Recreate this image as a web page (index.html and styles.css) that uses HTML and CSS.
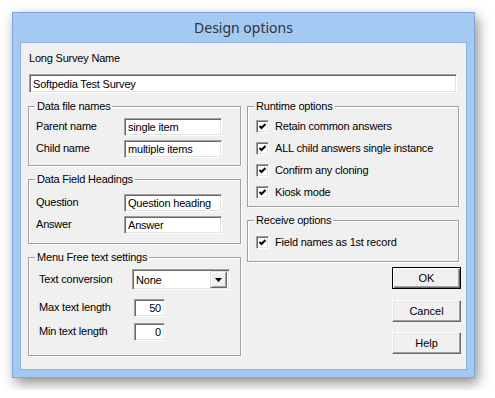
FILE: index.html
```html
<!DOCTYPE html>
<html lang="en">
<head>
    <meta charset="UTF-8">
    <title>Design options</title>
    <link rel="stylesheet" href="styles.css">
</head>
<body>
    <div class="window">
        <div class="title">Design options</div>
        <div class="client">
            <div class="name-label">Long Survey Name</div>
            <div class="field name-field">Softpedia Test Survey</div>

            <div class="columns">
                <div class="column">
                    <fieldset class="group">
                        <legend>Data file names</legend>
                        <div class="group-body files">
                            <div class="row"><span class="lbl">Parent name</span><span class="field small">single item</span></div>
                            <div class="row"><span class="lbl">Child name</span><span class="field small">multiple items</span></div>
                        </div>
                    </fieldset>

                    <fieldset class="group">
                        <legend>Data Field Headings</legend>
                        <div class="group-body headings">
                            <div class="row"><span class="lbl">Question</span><span class="field small">Question heading</span></div>
                            <div class="row"><span class="lbl">Answer</span><span class="field small">Answer</span></div>
                        </div>
                    </fieldset>

                    <fieldset class="group">
                        <legend>Menu Free text settings</legend>
                        <div class="group-body menu">
                            <div class="row tall">
                                <span class="lbl wide">Text conversion</span>
                                <span class="field select">None<span class="drop"><svg width="7" height="4" viewBox="0 0 7 4"><path d="M0 0h7L3.5 4z" fill="#000"/></svg></span></span>
                            </div>
                            <div class="row"><span class="lbl wide">Max text length</span><span class="field num">50</span></div>
                            <div class="row"><span class="lbl wide">Min text length</span><span class="field num">0</span></div>
                        </div>
                    </fieldset>
                </div>

                <div class="column">
                    <fieldset class="group">
                        <legend>Runtime options</legend>
                        <div class="group-body runtime">
                            <div class="check"><span class="box"><svg width="9" height="9" viewBox="0 0 9 9"><path d="M1.5 4l2 2 4-4" stroke="#000" stroke-width="2" fill="none"/></svg></span>Retain common answers</div>
                            <div class="check"><span class="box"><svg width="9" height="9" viewBox="0 0 9 9"><path d="M1.5 4l2 2 4-4" stroke="#000" stroke-width="2" fill="none"/></svg></span>ALL child answers single instance</div>
                            <div class="check"><span class="box"><svg width="9" height="9" viewBox="0 0 9 9"><path d="M1.5 4l2 2 4-4" stroke="#000" stroke-width="2" fill="none"/></svg></span>Confirm any cloning</div>
                            <div class="check"><span class="box"><svg width="9" height="9" viewBox="0 0 9 9"><path d="M1.5 4l2 2 4-4" stroke="#000" stroke-width="2" fill="none"/></svg></span>Kiosk mode</div>
                        </div>
                    </fieldset>

                    <fieldset class="group">
                        <legend>Receive options</legend>
                        <div class="group-body receive">
                            <div class="check"><span class="box"><svg width="9" height="9" viewBox="0 0 9 9"><path d="M1.5 4l2 2 4-4" stroke="#000" stroke-width="2" fill="none"/></svg></span>Field names as 1st record</div>
                        </div>
                    </fieldset>

                    <div class="buttons">
                        <button class="btn default">OK</button>
                        <button class="btn">Cancel</button>
                        <button class="btn">Help</button>
                    </div>
                </div>
            </div>
        </div>
    </div>
</body>
</html>
```

FILE: styles.css
```css
body {
    margin: 0;
    padding: 12px;
    background: #fff;
    font-family: 'Liberation Sans', Arial, sans-serif;
    font-size: 11px;
    letter-spacing: -0.2px;
    color: #000;
}

.window {
    box-sizing: border-box;
    width: 463px;
    height: 366px;
    border: 1px solid #7ea6d7;
    background: #a4caf4;
    padding: 0 7px 7px;
    box-shadow: 3px 5px 12px rgba(0,0,0,0.45);
    display: flex;
    flex-direction: column;
}

.title {
    height: 29px;
    line-height: 29px;
    text-align: center;
    font-family: 'Noto Sans', 'Open Sans', sans-serif;
    font-size: 14px;
    letter-spacing: 0;
    color: #333;
}

.client {
    flex: 1;
    border: 1px solid #8db3e0;
    background: #f0f0f0;
    padding: 8px 7px 0;
}

.name-label {
    line-height: 14px;
    margin-left: 1px;
}

.field {
    box-sizing: border-box;
    display: flex;
    align-items: center;
    background: #fff;
    border: 1px solid;
    border-color: #a0a0a0 #fff #fff #a0a0a0;
    box-shadow: inset 1px 1px 0 #696969, inset -1px -1px 0 #e3e3e3;
    padding: 0 3px;
    white-space: nowrap;
}

.name-field {
    width: 428px;
    height: 19px;
    margin: 9px 0 6px 1px;
}

.columns {
    display: flex;
    gap: 6px;
}

.column {
    width: 213px;
    display: flex;
    flex-direction: column;
}

.group {
    margin: 0;
    padding: 0;
    border: 1px solid #a0a0a0;
    box-shadow: 1px 1px 0 #fff, inset 1px 1px 0 #fff;
    min-width: 0;
}

.group + .group {
    margin-top: 6px;
}

.group legend {
    padding: 0 2px;
    margin-left: 6px;
    line-height: 14px;
}

.group-body {
    display: flex;
    flex-direction: column;
    gap: 4px;
}

.files { padding: 5px 7px 7px; }
.headings { padding: 8px 7px 9px; }
.menu { padding: 5px 10px 14px; gap: 6px; }
.runtime { padding: 5px 8px 6px; gap: 6px; }
.receive { padding: 7px 8px 11px; }

.row {
    display: flex;
    align-items: center;
    height: 18px;
}

.row.tall {
    height: 21px;
    margin-bottom: 3px;
}

.lbl {
    width: 88px;
    margin-top: -2px;
}

.lbl.wide {
    width: 95px;
}

.small {
    width: 98px;
    height: 18px;
}

.select {
    width: 100px;
    height: 21px;
    justify-content: space-between;
    padding-right: 2px;
}

.drop {
    box-sizing: border-box;
    width: 17px;
    height: 17px;
    display: flex;
    align-items: center;
    justify-content: center;
    background: #f0f0f0;
    border: 1px solid;
    border-color: #e3e3e3 #696969 #696969 #e3e3e3;
    box-shadow: inset 1px 1px 0 #fff, inset -1px -1px 0 #a0a0a0;
}

.num {
    width: 31px;
    height: 18px;
    justify-content: flex-end;
}

.check {
    display: flex;
    align-items: center;
    gap: 6px;
    height: 16px;
}

.box {
    box-sizing: border-box;
    width: 13px;
    height: 13px;
    display: flex;
    align-items: center;
    justify-content: center;
    background: #fff;
    border: 1px solid;
    border-color: #a0a0a0 #fff #fff #a0a0a0;
    box-shadow: inset 1px 1px 0 #696969, inset -1px -1px 0 #e3e3e3;
}

.buttons {
    display: flex;
    flex-direction: column;
    align-items: flex-end;
    gap: 10px;
    margin: 5px -2px 0 0;
}

.btn {
    box-sizing: border-box;
    width: 69px;
    height: 22px;
    font: inherit;
    color: #000;
    background: #f0f0f0;
    border: 1px solid;
    border-color: #fff #696969 #696969 #fff;
    box-shadow: inset -1px -1px 0 #a0a0a0, inset 1px 1px 0 #e3e3e3;
    padding: 0;
}

.btn.default {
    margin-bottom: 1px;
    border: 1px solid #000;
    box-shadow: inset 1px 1px 0 #fff, inset -1px -1px 0 #696969, inset -2px -2px 0 #a0a0a0;
}
```
